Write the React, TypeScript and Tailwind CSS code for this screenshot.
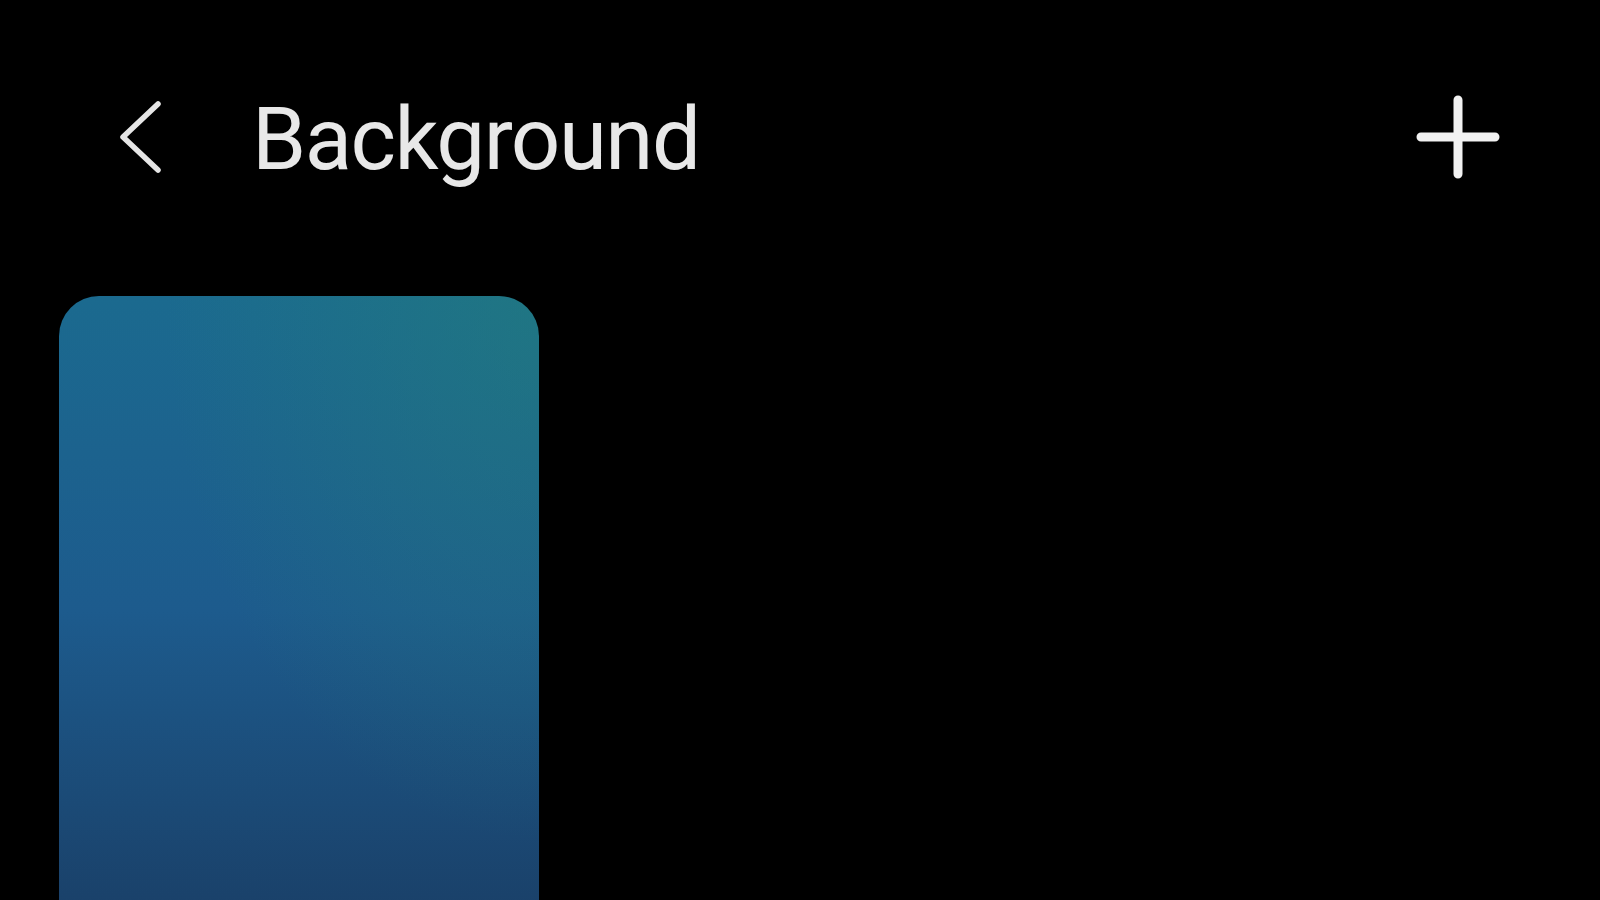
import React from 'react';

// Back chevron drawn thin, like the system header icon
const BackIcon = () => (
  <svg width="48" height="74" viewBox="0 0 48 74" fill="none">
    <path
      d="M42 4 L7 37 L42 70"
      stroke="#e6e6e6"
      strokeWidth="5.5"
      strokeLinecap="round"
      strokeLinejoin="round"
    />
  </svg>
);

const PlusIcon = () => (
  <svg width="84" height="84" viewBox="0 0 84 84" fill="none">
    <path
      d="M42 5 V79 M5 42 H79"
      stroke="#f2f2f2"
      strokeWidth="9"
      strokeLinecap="round"
    />
  </svg>
);

export default function App() {
  return (
    <div className="h-screen w-full overflow-hidden bg-black font-['Roboto','Liberation_Sans',sans-serif]">
      {/* Header */}
      <div className="flex h-[274px] items-center justify-between pl-[116px] pr-[100px]">
        <div className="flex items-center">
          <BackIcon />
          <span className="ml-[88px] mt-[4px] text-[87px] leading-none tracking-[-1.5px] text-[#e8e8e8]">
            Background
          </span>
        </div>
        <PlusIcon />
      </div>

      {/* Background thumbnails */}
      <div className="mt-[22px] flex pl-[59px]">
        <div className="h-[700px] w-[480px] rounded-[40px] bg-[radial-gradient(ellipse_at_top_right,rgba(36,130,120,0.5),transparent_55%),linear-gradient(to_bottom,#1b6a8f,#1d5b8d_45%,#19395f)]" />
      </div>
    </div>
  );
}
